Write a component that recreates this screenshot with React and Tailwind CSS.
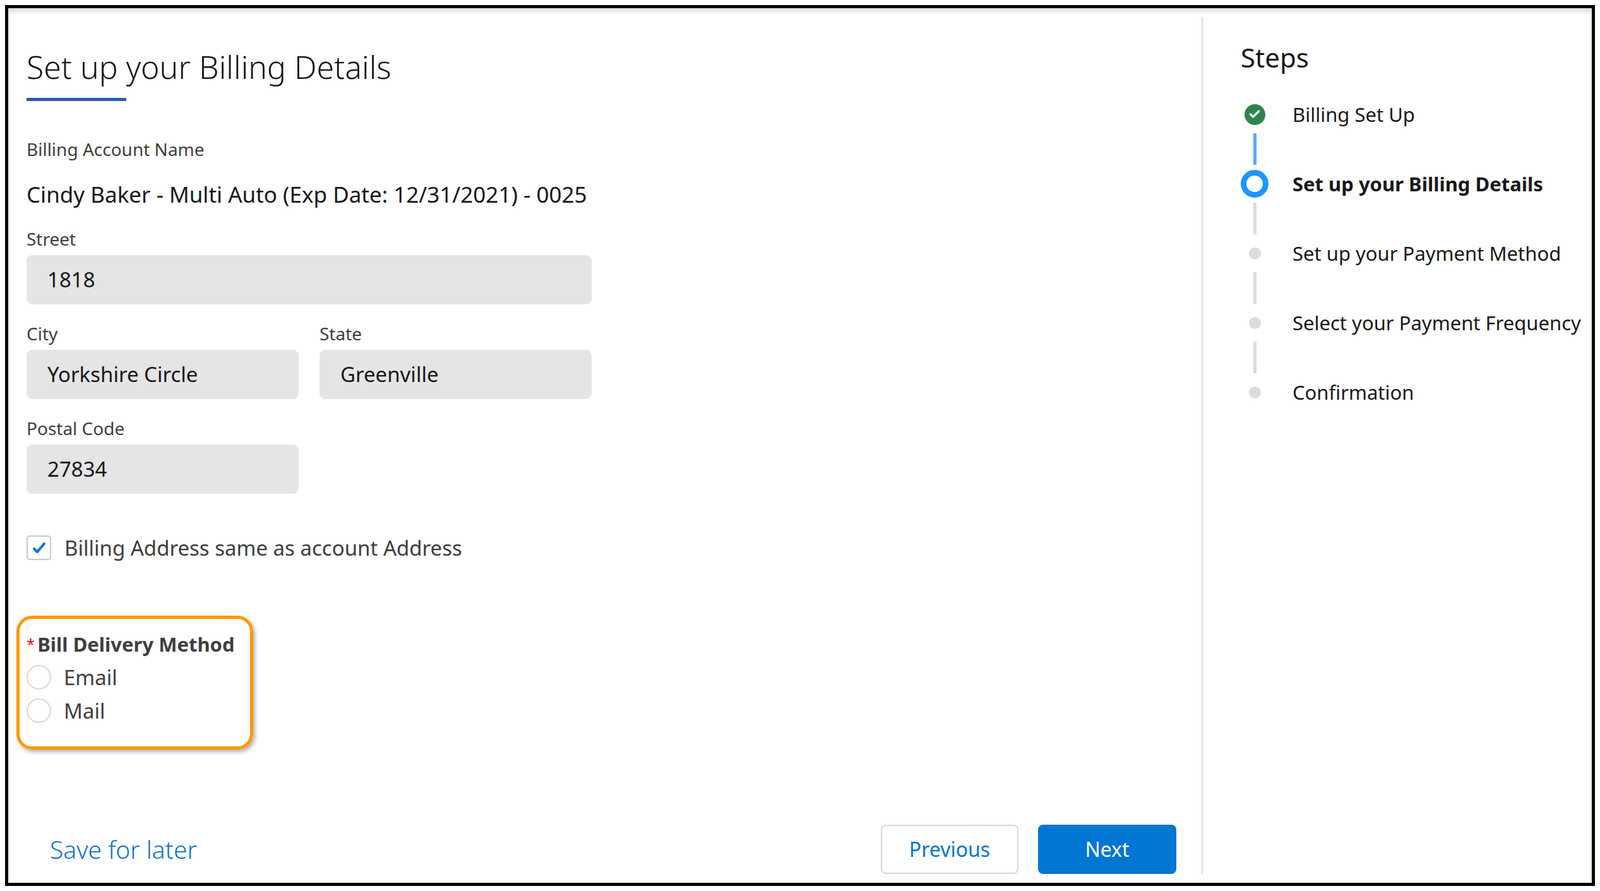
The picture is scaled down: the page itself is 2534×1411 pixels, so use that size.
import { Check } from 'lucide-react';

const steps = [
  { label: 'Billing Set Up', state: 'done' },
  { label: 'Set up your Billing Details', state: 'current' },
  { label: 'Set up your Payment Method', state: 'todo' },
  { label: 'Select your Payment Frequency', state: 'todo' },
  { label: 'Confirmation', state: 'todo' },
];

function Field({ label, value, className }) {
  return (
    <div className={className}>
      <div className="text-[28px] leading-[40px] text-[#3e3e3c]">{label}</div>
      <div className="mt-[6px] h-[78px] rounded-[9px] bg-[#e5e5e5] pl-[33px] flex items-center text-[33px] text-[#181818]">
        {value}
      </div>
    </div>
  );
}

function StepIcon({ state }) {
  if (state === 'done')
    return (
      <div className="w-[33px] h-[33px] rounded-full bg-[#2e844a] flex items-center justify-center">
        <Check className="w-[20px] h-[20px] text-white" strokeWidth={4} />
      </div>
    );
  if (state === 'current')
    return <div className="w-[44px] h-[44px] rounded-full border-[9px] border-[#1b96ff] bg-white" />;
  return <div className="w-[19px] h-[19px] rounded-full bg-[#dddddd]" />;
}

export default function App() {
  return (
    <div className="w-[2534px] h-[1411px] bg-white p-[8px] font-['Roboto',sans-serif]">
      <div className="w-full h-full border-[5px] border-black flex shadow-[inset_0_6px_6px_rgba(0,0,0,0.12)]">
        {/* left form */}
        <div className="w-[1890px] pl-[29px] pr-[40px] flex flex-col">
          <h1 className="mt-[60px] text-[50px] leading-[66px] font-light text-[#181818]">Set up your Billing Details</h1>
          <div className="mt-[16px] w-[158px] h-[5px] bg-[#2a5db0]" />

          <div className="mt-[56px] text-[28px] leading-[40px] text-[#3e3e3c]">Billing Account Name</div>
          <div className="mt-[30px] text-[35px] leading-[44px] text-[#181818]">Cindy Baker - Multi Auto (Exp Date: 12/31/2021) - 0025</div>

          <Field className="mt-[28px] w-[895px]" label="Street" value="1818" />
          <div className="mt-[26px] flex gap-[33px] w-[895px]">
            <Field className="flex-1" label="City" value="Yorkshire Circle" />
            <Field className="flex-1" label="State" value="Greenville" />
          </div>
          <Field className="mt-[26px] w-[431px]" label="Postal Code" value="27834" />

          <div className="mt-[61px] flex items-center gap-[21px]">
            <div className="w-[39px] h-[39px] rounded-[5px] border-2 border-[#c9c9c9] flex items-center justify-center">
              <svg viewBox="0 0 24 24" className="w-[24px] h-[24px]">
                <path d="M4 13l5 5L20 5" fill="none" stroke="#0176d3" strokeWidth="4" strokeLinecap="round" strokeLinejoin="round" />
              </svg>
            </div>
            <span className="text-[33px] text-[#3e3e3c]">Billing Address same as account Address</span>
          </div>

          <div className="mt-[82px] -ml-[16px] w-[375px] h-[212px] rounded-[25px] border-[5px] border-[#ff9a00] shadow-[3px_4px_6px_rgba(0,0,0,0.3)] pl-[11px] pt-[20px]">
            <div className="flex items-start text-[31px] font-bold text-[#3e3e3c] leading-[40px]">
              <span className="text-[#ea001e] text-[24px] font-normal mr-[4px]">*</span>
              Bill Delivery Method
            </div>
            {['Email', 'Mail'].map((o) => (
              <div key={o} className="mt-[13px] flex items-center gap-[20px] h-[40px]">
                <div className="w-[39px] h-[39px] rounded-full border-2 border-[#d8d8d8] bg-white" />
                <span className="text-[33px] text-[#3e3e3c]">{o}</span>
              </div>
            ))}
          </div>

          <div className="mt-auto mb-[14px] flex items-center">
            <a className="ml-[37px] text-[39px] text-[#0b72d2] font-light">Save for later</a>
            <div className="ml-auto flex gap-[31px]">
              <button className="w-[218px] h-[78px] rounded-[8px] border-2 border-[#d8d8d8] text-[32px] text-[#0176d3]">Previous</button>
              <button className="w-[219px] h-[78px] rounded-[8px] bg-[#0176d3] text-[32px] text-white">Next</button>
            </div>
          </div>
        </div>

        {/* steps */}
        <div className="my-[14px] border-l-2 border-[#dcdcdc] flex-1 pl-[60px] pt-[36px] font-['Open_Sans',sans-serif]">
          <div className="text-[42px] leading-[56px] text-[#181818]">Steps</div>
          <div className="mt-[40px] flex flex-col">
            {steps.map((s, i) => (
              <div key={s.label}>
                <div className="flex items-center h-[44px]">
                  <div className="w-[44px] flex justify-center">
                    <StepIcon state={s.state} />
                  </div>
                  <span className={`ml-[38px] text-[31px] text-[#181818] ${s.state === 'current' ? 'font-bold' : ''}`}>
                    {s.label}
                  </span>
                </div>
                {i < steps.length - 1 && (
                  <div className="w-[44px] flex justify-center py-[8px]">
                    <div className={`w-[5px] h-[50px] ${i === 0 ? 'bg-[#5aabf7]' : 'bg-[#dcdcdc]'}`} />
                  </div>
                )}
              </div>
            ))}
          </div>
        </div>
      </div>
    </div>
  );
}
